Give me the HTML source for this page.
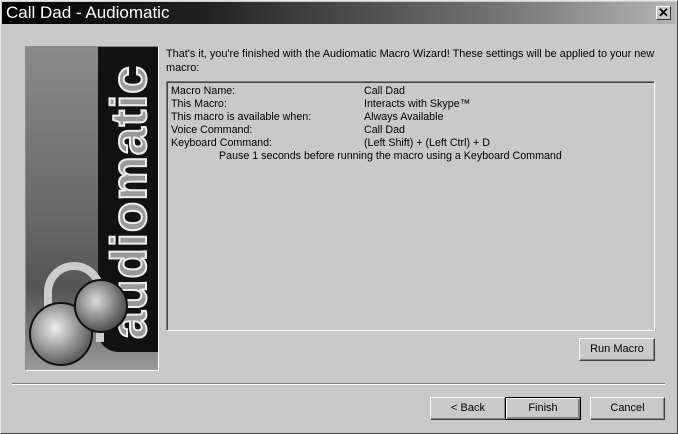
<!DOCTYPE html>
<html><head><style>
body{margin:0;width:678px;height:434px;background:#c9c9c9;font-family:"Liberation Sans",sans-serif;font-size:11px;color:#000;position:relative;overflow:hidden}
.frame{position:absolute;left:0;top:0;width:676px;height:432px;border:1px solid;border-color:#e8e8e8 #404040 #404040 #e8e8e8}
.title{position:absolute;left:2px;top:2px;width:674px;height:22px;background:linear-gradient(90deg,#000 0%,#222 30%,#777 75%,#b4b4b4 100%);color:#fff;font-size:17px;line-height:22px;padding-left:4px;box-sizing:border-box}
.close{position:absolute;left:656px;top:6px;width:15px;height:14px;background:#c9c9c9;border:1px solid;border-color:#fff #333 #333 #fff;box-sizing:border-box;font-size:13px;font-weight:bold;line-height:12px;text-align:center;color:#000}
.abs{position:absolute}
.btn{position:absolute;height:23px;background:#c9c9c9;border:1px solid;border-color:#fff #404040 #404040 #fff;box-shadow:inset -1px -1px 0 #888;box-sizing:border-box;text-align:center;line-height:21px;font-size:11px}
.list{position:absolute;left:166px;top:81px;width:489px;height:250px;border:1px solid;border-color:#808080 #fff #fff #808080;box-shadow:inset 1px 1px 0 #404040;box-sizing:border-box}
.row{position:absolute;line-height:13px;white-space:nowrap;font-size:10.7px}
</style></head><body>
<div class="frame"></div>
<div class="title">Call Dad - Audiomatic</div>
<div class="close">✕</div>

<div class="abs" style="left:25px;top:46px;width:134px;height:325px;border:1px solid;border-color:#888 #fff #fff #888;box-sizing:border-box;background:linear-gradient(180deg,#8a8a8a,#6a6a6a 50%,#555 75%,#9a9a9a);overflow:hidden">
 <div class="abs" style="left:72px;top:0;width:61px;height:305px;background:#111;border-radius:0 0 0 20px"></div>
 <div class="abs" style="left:-52px;top:130px;width:310px;height:50px;transform:rotate(-90deg);transform-origin:center;font:bold 50px 'Liberation Sans',sans-serif;color:#999;-webkit-text-stroke:2px #eee;letter-spacing:1px;text-align:center;line-height:50px">audiomatic</div>
 <div class="abs" style="left:18px;top:215px;width:60px;height:80px;border:8px solid #ccc;border-bottom:none;border-radius:40px 40px 0 0;box-sizing:border-box"></div>
 <div class="abs" style="left:3px;top:255px;width:60px;height:60px;border-radius:50%;background:radial-gradient(circle at 40% 40%,#eee,#777 60%,#222);border:2px solid #111"></div>
 <div class="abs" style="left:48px;top:232px;width:50px;height:50px;border-radius:50%;background:radial-gradient(circle at 40% 40%,#ddd,#666 60%,#222);border:2px solid #111"></div>
</div>

<div class="abs" style="left:166px;top:47px;line-height:14px;width:500px;font-size:10.9px">That's it, you're finished with the Audiomatic Macro Wizard! These settings will be applied to your new macro:</div>

<div class="list">
 <div class="row" style="left:4px;top:3px">Macro Name:<br>This Macro:<br>This macro is available when:<br>Voice Command:<br>Keyboard Command:</div>
 <div class="row" style="left:197px;top:3px">Call Dad<br>Interacts with Skype™<br>Always Available<br>Call Dad<br>(Left Shift) + (Left Ctrl) + D</div>
 <div class="row" style="left:52px;top:68px">Pause 1 seconds before running the macro using a Keyboard Command</div>
</div>

<div class="btn" style="left:579px;top:338px;width:76px">Run Macro</div>
<div class="abs" style="left:12px;top:383px;width:653px;height:1px;background:#808080;border-bottom:1px solid #fff"></div>
<div class="btn" style="left:430px;top:397px;width:76px">&lt; Back</div>
<div class="btn" style="left:505px;top:397px;width:76px;border:1px solid #000;box-shadow:inset 1px 1px 0 #fff,inset -2px -2px 0 #808080">Finish</div>
<div class="btn" style="left:590px;top:397px;width:75px">Cancel</div>
</body></html>
